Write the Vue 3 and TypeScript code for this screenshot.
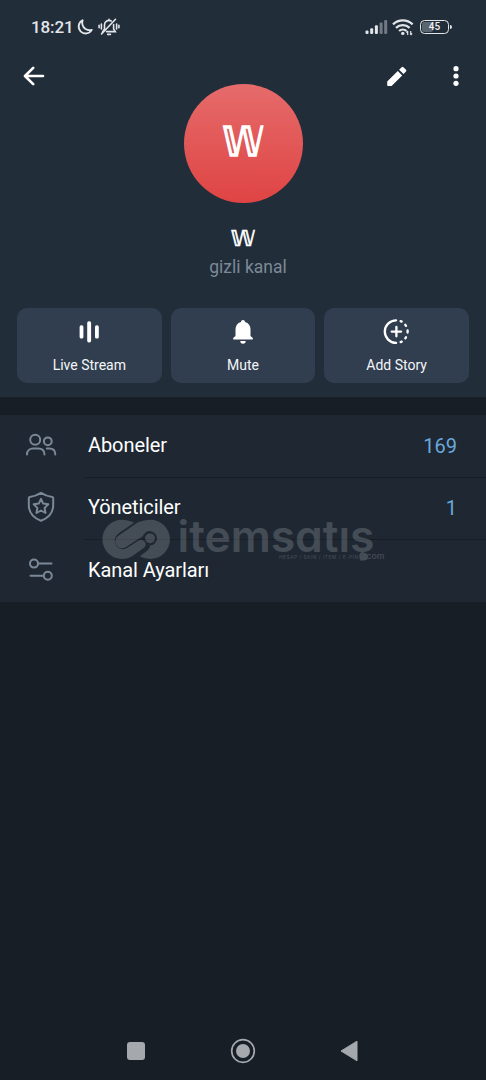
<script setup lang="ts">
interface Action { id: 'live' | 'mute' | 'story'; label: string }
interface Row { id: 'members' | 'admins' | 'settings'; label: string; value?: string }

const actions: Action[] = [
  { id: 'live', label: 'Live Stream' },
  { id: 'mute', label: 'Mute' },
  { id: 'story', label: 'Add Story' },
]
const rows: Row[] = [
  { id: 'members', label: 'Aboneler', value: '169' },
  { id: 'admins', label: 'Yöneticiler', value: '1' },
  { id: 'settings', label: 'Kanal Ayarları' },
]
</script>

<template>
  <div class="screen">
    <header class="profile">
      <div class="status">
        <span class="time">18:21</span>
        <svg class="moon" width="18" height="18" viewBox="0 0 18 18">
          <path d="M6.6 2.200A7 7 0 1 0 15.800 11.900Q12.500 13 9.200 10.800 5.200 7.500 6.600 2.200Z" fill="none" stroke="#e3e6e9" stroke-width="1.800" stroke-linejoin="round" />
        </svg>
        <svg class="silent" width="22" height="20" viewBox="0 0 22 20" fill="none" stroke="#e3e6e9" stroke-width="1.600" stroke-linecap="round">
          <path d="M6.500 12V8A4.500 4.500 0 0 1 13.200 4M15.600 7.500V12l1.700 2.600H8.500M5.600 14.600H4.800L6 12.600M9.700 17.400h2.700M11 2.300v1M3.500 17 17.500 2.300" />
          <path d="M3.400 7v5M1.100 8.300v2.400M18.600 7v5M20.900 8.300v2.400" />
        </svg>
        <div class="status-right">
          <svg class="signal" width="23" height="16" viewBox="0 0 23 16">
            <g fill="#e3e6e9">
              <rect x="0.500" y="11.500" width="3" height="3.500" rx="1" />
              <rect x="5.200" y="9.200" width="3" height="5.800" rx="1" />
              <rect x="9.900" y="6.300" width="3" height="8.700" rx="1" />
            </g>
            <g fill="#727b85">
              <rect x="14.600" y="3.600" width="3" height="11.400" rx="1" />
              <rect x="19.200" y="1" width="3" height="14" rx="1" />
            </g>
          </svg>
          <svg class="wifi" width="22" height="17" viewBox="0 0 22 17" fill="none" stroke="#e3e6e9" stroke-width="2.300">
            <path d="M1 5.300a14.200 14.200 0 0 1 19.600 0M4 8.800a10 10 0 0 1 13.600 0M7.100 12a5.600 5.600 0 0 1 7.400 0" />
            <circle cx="10.800" cy="14.400" r="1.700" fill="#e3e6e9" stroke="none" />
            <path d="M15.700 16v-4M18.700 12v4M14.400 13.600l1.300-1.600M20 14.400l-1.300 1.600" stroke-width="1.200" />
          </svg>
          <div class="battery"><span class="level"></span><span class="percent">45</span></div>
          <span class="battery-tip"></span>
        </div>
      </div>

      <div class="toolbar">
        <svg class="back" width="22" height="20" viewBox="0 0 22 20">
          <path d="M20 10H2.200M10.200 1.800 2 10l8.200 8.200" fill="none" stroke="#fff" stroke-width="2.600" stroke-linecap="round" stroke-linejoin="round" />
        </svg>
        <svg class="pencil" width="22" height="22" viewBox="0 0 22 22" fill="#fff">
          <path d="M1.200 16.600v3.600q0 .8.8.8h3.600L16.200 10.400 11.800 6ZM13.100 4.700l4.400 4.400 2.500-2.500q.9-.9 0-1.800L17.400 2.200q-.9-.9-1.800 0Z" />
        </svg>
        <svg class="more" width="6" height="20" viewBox="0 0 6 20" fill="#fff">
          <circle cx="3" cy="2.700" r="2.600" /><circle cx="3" cy="10" r="2.600" /><circle cx="3" cy="17.300" r="2.600" />
        </svg>
      </div>

      <div class="avatar"><span>𝕎</span></div>
      <h1 class="name">𝕎</h1>
      <p class="kind">gizli kanal</p>

      <div class="actions">
        <button v-for="a in actions" :key="a.id" class="action" type="button">
          <svg width="28" height="28" viewBox="0 0 28 28">
            <g v-if="a.id === 'live'" fill="#fff">
              <rect x="4.600" y="7.300" width="3.800" height="13.200" rx="1.600" />
              <rect x="12.200" y="3.200" width="3.900" height="21.200" rx="1.700" />
              <rect x="20" y="7.300" width="3.800" height="13.200" rx="1.600" />
            </g>
            <g v-else-if="a.id === 'mute'" fill="#fff">
              <path d="M14 1.900c1.200 0 2 .8 2 2 3.700 1 5.500 4 5.500 7.600v6.400l2.300 2.200q.6 1.500-.7 1.500H4.900q-1.300 0-.7-1.500l2.300-2.200v-6.400c0-3.600 1.800-6.600 5.500-7.600 0-1.200.8-2 2-2ZM11.300 23h5.400a2.700 2.700 0 0 1-5.400 0Z" />
            </g>
            <g v-else transform="translate(-.6 -.4)" fill="none" stroke="#fff" stroke-width="2.300" stroke-linecap="round">
              <path d="M13.700 2.700a11.300 11.300 0 0 0 0 22.600" />
              <path d="M18.200 3.500l1.100.5M22.900 7.200l.7 1.100M25.200 12.900v2M23.600 19.700l-.7 1.100M19.300 24l-1.100.5" />
              <path d="M14 9.300v9.400M9.300 14h9.400" />
            </g>
          </svg>
          <span>{{ a.label }}</span>
        </button>
      </div>
    </header>

    <main class="list">
      <div v-for="r in rows" :key="r.id" class="row">
        <svg class="row-icon" width="34" height="34" viewBox="0 0 34 34" fill="none" stroke="#7b8997" stroke-width="2" stroke-linecap="round" stroke-linejoin="round">
          <g v-if="r.id === 'members'">
            <circle cx="11.200" cy="11.700" r="5" /><circle cx="23.800" cy="13.300" r="3.900" />
            <path d="M3 26.500c0-4 3-6 6-6h5c3.800 0 6.500 2 6.500 6M22.800 20.500h2.500c3.800 0 6 2.300 6 6" />
          </g>
          <g v-else-if="r.id === 'admins'">
            <path d="M17 2.800c3.400 2.200 7 3.500 11.200 4.100q1 .2 1 1.200v6.800c0 7.700-4.700 13.100-12.200 15.800C9.500 28 4.800 22.600 4.800 14.900V8.100q0-1 1-1.200C10 6.300 13.600 5 17 2.800Z" />
            <path d="m17 8.900 2.200 4.700 5.100.7-3.700 3.600.9 5.100-4.500-2.500-4.500 2.500.9-5.100-3.700-3.600 5.100-.7Z" />
          </g>
          <g v-else>
            <circle cx="10" cy="10.600" r="4" /><path d="M14.500 10.600H27.500M6.500 22.800H19" /><circle cx="23.800" cy="22.800" r="4" />
          </g>
        </svg>
        <div class="row-body">
          <span class="label">{{ r.label }}</span>
          <span v-if="r.value" class="value">{{ r.value }}</span>
        </div>
      </div>
      <svg class="watermark" width="290" height="48" viewBox="0 0 290 48">
        <g fill="#fff">
          <path d="M29.800 5.200Q25.500 3.700 21 3.700A19.650 19.650 0 0 0 21 43Q27 43 31.500 40L43 31.800A4.600 4.600 0 0 0 38 24.200L25.500 32.300C19.500 35.500 13.800 30.500 13.800 25Q13.800 20 18 17L33 6.800Z" />
          <path d="M49.300 3.700A19.650 19.650 0 0 1 49.300 43Q43 43 38.700 40.300L46.500 34.500Q49 32.500 49 29.500A7.200 7.200 0 1 0 41.800 20.300L24.500 31.300A5.600 5.600 0 0 1 17.400 19.800L37 6.300Q43 3.700 49.300 3.700Z" />
          <circle cx="49" cy="22.300" r="4.900" />
        </g>
        <text class="brand" x="76.500" y="36" textLength="197" lengthAdjust="spacingAndGlyphs">itemsatış</text>
        <text class="tagline" x="178" y="43" textLength="79" lengthAdjust="spacing">HESAP / SKIN / ITEM / E-PIN</text>
        <circle cx="261.700" cy="40" r="3.500" fill="#fff" />
        <text class="domain" x="265.500" y="42.500" textLength="18" lengthAdjust="spacingAndGlyphs">com</text>
      </svg>
    </main>

    <nav class="system-nav">
      <svg width="26" height="26" viewBox="0 0 26 26"><rect x="4" y="4" width="18" height="18" rx="3" fill="#a5a8ac" /></svg>
      <svg width="26" height="26" viewBox="0 0 26 26"><circle cx="13" cy="13" r="11.300" fill="none" stroke="#a5a8ac" stroke-width="1.700" /><circle cx="13" cy="13" r="7" fill="#a5a8ac" /></svg>
      <svg width="26" height="26" viewBox="0 0 26 26"><path d="M5 13 21 3.200v19.600Z" fill="#a5a8ac" stroke="#a5a8ac" stroke-linejoin="round" /></svg>
    </nav>
  </div>
</template>

<style>
html, body { margin: 0; background: #171e26; }
</style>

<style scoped>
.screen {
  width: 486px;
  height: 1080px;
  box-sizing: border-box;
  display: flex;
  flex-direction: column;
  overflow: hidden;
  background: #171e26;
  color: #fff;
  font-family: Roboto, "Liberation Sans", sans-serif;
}
svg { display: block; flex: none; }
.profile { height: 397px; background: #222d3a; display: flex; flex-direction: column; flex: none; }
.status { height: 54px; display: flex; align-items: center; padding: 0 34px 0 31px; flex: none; box-sizing: border-box; }
.time { font-size: 17px; font-weight: 500; color: #e3e6e9; width: 43px; letter-spacing: -0.100px; }
.moon { margin-left: 2px; }
.silent { margin-left: 4px; }
.status-right { margin-left: auto; display: flex; align-items: center; }
.wifi { margin-left: 4px; }
.battery {
  margin-left: 6px; width: 29px; height: 14px; box-sizing: border-box;
  border: 1.500px solid #e3e6e9; border-radius: 4.500px;
  display: grid; align-items: center; overflow: hidden; padding: 1px;
}
.level { grid-area: 1 / 1; height: 100%; width: 11px; background: #5b6570; border-radius: 2px; }
.percent { grid-area: 1 / 1; text-align: center; font-size: 10px; line-height: 10px; font-weight: 500; color: #f0f2f4; }
.battery-tip { width: 2px; height: 4px; margin-left: 1px; background: #e3e6e9; border-radius: 0 2px 2px 0; }
.toolbar { height: 44px; display: flex; align-items: center; padding: 0 27px 0 23px; flex: none; }
.pencil { margin-left: auto; margin-right: 45px; margin-bottom: 1px; }
.avatar {
  width: 119px; height: 119px; margin: -14px auto 0; border-radius: 50%; flex: none;
  background: linear-gradient(#e66b6b, #df4444);
  display: flex; align-items: center; justify-content: center;
  font-family: "DejaVu Sans", sans-serif; font-size: 39px; line-height: 1;
  -webkit-text-stroke: 1.400px #fff;
}
.avatar span { transform: translate(0.500px, -1px) scaleX(0.960) scaleY(1.030); }
.name {
  margin: 21px 0 0; height: 30px; line-height: 30px; text-align: center;
  font-family: "DejaVu Sans", sans-serif; font-size: 22px; font-weight: 400;
  -webkit-text-stroke: 0.700px #fff;
}
.kind { margin: 2px 0 0; height: 22px; line-height: 22px; text-align: center; font-size: 17.500px; color: #7c8a98; padding-left: 10px; }
.actions { margin: 30px 17px 0; display: grid; grid-template-columns: repeat(3, 1fr); gap: 9px; }
.action {
  height: 75px; border: 0; border-radius: 10px; background: #303e50; color: #f4f6f8;
  display: flex; flex-direction: column; align-items: center; padding: 10px 0 0; gap: 9px;
  font: 400 14px/20px Roboto, sans-serif;
}
.list { position: relative; margin-top: 18px; height: 187px; background: #1e2732; flex: none; }
.row { height: 62.500px; display: flex; align-items: center; }
.row-icon { margin-left: 24px; margin-bottom: 3px; }
.row-body {
  margin-left: 26px; padding: 0 29px 2px 4px; flex: 1; height: 100%; box-sizing: border-box;
  border-bottom: 1px solid #171e26; display: flex; align-items: center; justify-content: space-between;
}
.label { font-size: 20px; line-height: 24px; letter-spacing: -0.080px; }
.value { font-size: 20px; line-height: 24px; color: #6aa8dc; padding-top: 2px; }
.watermark { position: absolute; left: 101px; top: 101px; opacity: 0.170; pointer-events: none; overflow: visible; }
.watermark text { fill: #fff; font-family: Inter, sans-serif; }
.watermark .brand { font-size: 44px; font-weight: 600; font-feature-settings: "cv11"; }
.watermark .tagline { font-size: 4.800px; }
.watermark .domain { font-size: 9px; font-weight: 500; }
.system-nav { margin-top: auto; height: 58px; padding: 0 124px 0 123px; display: flex; justify-content: space-between; align-items: center; }
</style>
